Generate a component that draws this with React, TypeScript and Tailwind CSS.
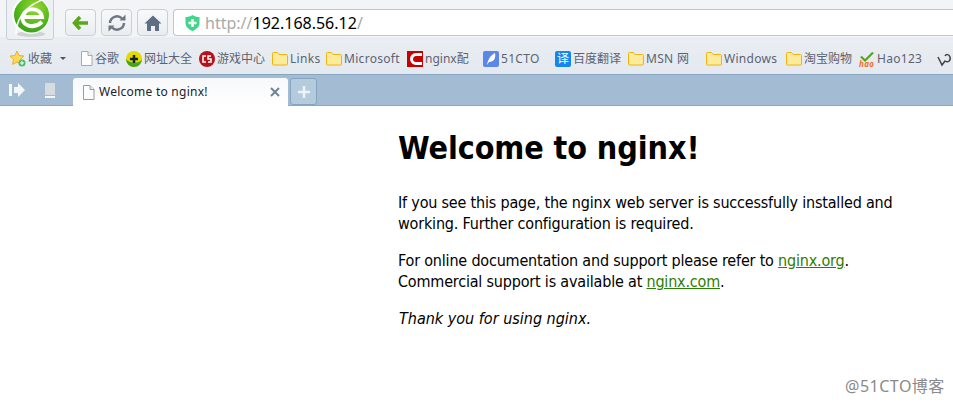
import React from "react";

function Folder() {
  return (
    <svg width="16" height="14" viewBox="0 0 16 14" className="shrink-0">
      <path d="M.5 1.500a1 1 0 0 1 1-1h4l1.500 2h7.500a1 1 0 0 1 1 1v8.500a1 1 0 0 1-1 1h-13a1 1 0 0 1-1-1z" fill="#fdeb9c" stroke="#f2b20f" />
    </svg>
  );
}

function Doc({ color = "#a9a9a9" }: { color?: string }) {
  return (
    <svg width="13" height="15" viewBox="0 0 13 15" className="shrink-0">
      <path d="M1.500.5h6.500l4 4v10h-10.500z" fill="#fdfdfd" stroke={color} />
      <path d="M8 .5v4h4" fill="#eee" stroke={color} />
    </svg>
  );
}

function Logo() {
  return (
    <svg width="40" height="38" viewBox="0 0 40 38" className="absolute left-[11px] top-0">
      <defs>
        <radialGradient id="lg" cx="0.6" cy="0.3" r="0.8">
          <stop offset="0" stopColor="#9bd832" />
          <stop offset="0.6" stopColor="#53b81c" />
          <stop offset="1" stopColor="#2f9a14" />
        </radialGradient>
      </defs>
      <ellipse cx="20" cy="34" rx="14" ry="3" fill="#cfd3d6" />
      <circle cx="20" cy="15" r="19" fill="#fff" />
      <circle cx="20.500" cy="15" r="17.500" fill="url(#lg)" />
      <path d="M37 -2C22 2 5 13 5 34" fill="none" stroke="#fff" strokeWidth="1.500" />
      <path d="M11 17h20c-1-9-16-11-19-1c-3 9 10 14 19 6" fill="none" stroke="#fff" strokeWidth="4" />
    </svg>
  );
}

function NavButton({ children }: { children: React.ReactNode }) {
  return (
    <div className="flex h-[27px] w-[31px] items-center justify-center rounded-[4px] border border-[#c6d0da] bg-gradient-to-b from-[#f8f9fa] to-[#e9edf1]">
      {children}
    </div>
  );
}

function Shield() {
  return (
    <svg width="15" height="16" viewBox="0 0 15 16" className="shrink-0">
      <path d="M7.500 0C5.500 1.500 3 2 .5 2v6c0 4 3.500 6.500 7 8c3.500-1.500 7-4 7-8V2C12 2 9.500 1.500 7.500 0z" fill="#3fd68c" />
      <path d="M7.500 4v8M3.500 8h8" stroke="#fff" strokeWidth="2.500" />
    </svg>
  );
}

function Bookmark({ className, icon, label }: { className: string; icon: React.ReactNode; label: string }) {
  return (
    <div className={`flex shrink-0 items-center gap-[2px] ${className}`}>
      {icon}
      <span className="whitespace-nowrap">{label}</span>
    </div>
  );
}

export default function App() {
  return (
    <div className="relative h-[404px] w-[953px] overflow-hidden bg-white font-['Noto_Sans','Noto_Sans_CJK_SC',sans-serif]">
      {/* toolbar */}
      <div className="relative flex h-[37px] items-start bg-[#f2f4f6] pl-[65px] pt-[9px]">
        <div className="absolute left-[6px] top-[-6px] h-[46px] w-[48px] rounded-[3px] border border-[#c6d0da] bg-[#eef1f4]" />
        <Logo />
        <div className="flex gap-[5px]">
          <NavButton>
            <svg width="18" height="16" viewBox="0 0 18 16">
              <path d="M8 2L2.500 8L8 14M3 8h13" fill="none" stroke="#5aa71c" strokeWidth="3.500" />
            </svg>
          </NavButton>
          <NavButton>
            <svg width="20" height="18" viewBox="0 0 20 18">
              <path d="M3 9a7 7 0 0 1 12-4.500M17 9a7 7 0 0 1-12 4.500" fill="none" stroke="#6e7882" strokeWidth="2.500" />
              <path d="M12.500 6.500h6v-6zM7.500 11.500h-6v6z" fill="#6e7882" />
            </svg>
          </NavButton>
          <NavButton>
            <svg width="18" height="16" viewBox="0 0 18 16">
              <path d="M9 .5L.5 8.500h2.500V16h4v-5h4v5h4V8.500h2.500z" fill="#5e6f85" />
            </svg>
          </NavButton>
        </div>
        <div className="ml-[5px] flex h-[27px] flex-1 items-center gap-[5px] rounded-l-[4px] border-y border-l border-[#b3c9de] bg-white pl-[11px] text-[16px] leading-none">
          <Shield />
          <span className="whitespace-nowrap">
            <span className="text-[#a9a9a9]">http://</span>
            <span className="text-black">192.168.56.12</span>
            <span className="text-[#a9a9a9]">/</span>
          </span>
        </div>
      </div>

      {/* bookmarks */}
      <div className="flex h-[37px] items-center bg-gradient-to-b from-[#eaeef2] to-[#e4e9f0] pl-[10px] pt-[6px] text-[12px] text-[#5c6373]">
        <div className="flex w-[70px] shrink-0 items-center gap-[2px]">
          <svg width="16" height="17" viewBox="0 0 16 17" className="shrink-0">
            <path d="M7 1l2 4.500 5 .5-3.500 3.500 1 5L7 12l-4.500 2.500 1-5L0 6l5-.5z" fill="#fdd85c" stroke="#e8b22c" />
            <circle cx="12" cy="13" r="3.500" fill="#4cbb6c" />
            <path d="M12 11v4M10 13h4" stroke="#fff" />
          </svg>
          <span>收藏</span>
          <span className="ml-[6px] h-0 w-0 border-x-[3px] border-t-[3px] border-x-transparent border-t-[#555]" />
        </div>
        <Bookmark className="w-[46px]" icon={<Doc />} label="谷歌" />
        <Bookmark
          className="w-[73px]"
          icon={
            <svg width="16" height="16" viewBox="0 0 16 16" className="shrink-0">
              <circle cx="8" cy="8" r="8" fill="#e3d900" />
              <path d="M0 8a8 8 0 0 0 16 0c-2 5-12 5-16 0z" fill="#43a51d" />
              <path d="M8 4v8M4 8h8" stroke="#123" strokeWidth="2.500" />
            </svg>
          }
          label="网址大全"
        />
        <Bookmark
          className="w-[73px]"
          icon={
            <svg width="16" height="16" viewBox="0 0 16 16" className="shrink-0">
              <circle cx="8" cy="8" r="8" fill="#b5121b" />
              <path d="M7 5H4v6h3M12 5H9v3h3v3H9" fill="none" stroke="#fff" strokeWidth="1.500" />
            </svg>
          }
          label="游戏中心"
        />
        <Bookmark className="w-[54px] tracking-[0.3px]" icon={<Folder />} label="Links" />
        <Bookmark className="w-[81px] tracking-[0.3px]" icon={<Folder />} label="Microsoft" />
        <Bookmark
          className="w-[76px]"
          icon={
            <svg width="16" height="16" viewBox="0 0 16 16" className="shrink-0">
              <rect width="16" height="16" fill="#c70000" />
              <path d="M15 3.500H9a4.500 4.500 0 0 0 0 9h6" fill="none" stroke="#fff" strokeWidth="3" />
            </svg>
          }
          label="nginx配"
        />
        <Bookmark
          className="w-[72px] tracking-[0.3px]"
          icon={
            <svg width="16" height="16" viewBox="0 0 16 16" className="shrink-0">
              <rect width="16" height="16" rx="2" fill="#5b87e8" />
              <path d="M4 14C5 8 8 4 12 2c1 5-1 9-6 9z" fill="#fff" />
            </svg>
          }
          label="51CTO"
        />
        <Bookmark
          className="w-[73px]"
          icon={
            <span className="flex h-[16px] w-[16px] shrink-0 items-center justify-center rounded-[2px] bg-[#1487ee] text-[12px] leading-none text-white">
              译
            </span>
          }
          label="百度翻译"
        />
        <Bookmark className="w-[78px] tracking-[0.3px]" icon={<Folder />} label="MSN 网" />
        <Bookmark className="w-[80px] tracking-[0.3px]" icon={<Folder />} label="Windows" />
        <Bookmark className="w-[73px]" icon={<Folder />} label="淘宝购物" />
        <Bookmark
          className="w-[78px] tracking-[0.3px]"
          icon={
            <svg width="16" height="16" viewBox="0 0 16 16" className="shrink-0">
              <path d="M3 5l3 3 7-7 2 1-9 9-5-5z" fill="#55a31a" />
              <text x="0" y="15.500" fontSize="8" fontStyle="italic" fontWeight="700" fill="#f0701d">hao</text>
            </svg>
          }
          label="Hao123"
        />
        <svg width="16" height="16" viewBox="0 0 16 16" className="shrink-0">
          <path d="M1 6l4 8 3-4c3 2 6 0 5-4c-1-3-4-3-5-1" fill="none" stroke="#444" strokeWidth="1.500" />
        </svg>
      </div>

      {/* tab bar */}
      <div className="flex h-[32px] items-end border-y border-t-[#86a6c2] border-b-[#8aa8c4] bg-[#a3bcd3]">
        <div className="flex h-[30px] w-[73px] shrink-0 items-center gap-[20px] self-start pl-[9px]">
          <svg width="16" height="14" viewBox="0 0 16 14">
            <path d="M0 1h3v12H0zM5 4h4V0l7 7-7 7v-4H5z" fill="#f4f7fa" />
          </svg>
          <svg width="10" height="15" viewBox="0 0 10 15">
            <rect x="0" y="0" width="10" height="12" fill="#d7dade" />
            <rect x="0" y="13" width="10" height="2" fill="#f4f7fa" />
          </svg>
        </div>
        <div className="-mb-px flex h-[28px] w-[215px] shrink-0 items-center rounded-t-[3px] bg-gradient-to-b from-[#f6f8fa] to-white pl-[9px] pr-[8px] text-[12px] text-[#222]">
          <Doc color="#9a9a9a" />
          <span className="ml-[4px] flex-1 whitespace-nowrap tracking-[0.25px]">Welcome to nginx!</span>
          <svg width="10" height="10" viewBox="0 0 10 10">
            <path d="M1 1l8 8M9 1l-8 8" stroke="#6f8296" strokeWidth="2" />
          </svg>
        </div>
        <div className="ml-[2px] flex h-[27px] w-[27px] shrink-0 items-center justify-center rounded-[3px] border border-[#84a4c1] bg-[#b4cadd]">
          <svg width="12" height="12" viewBox="0 0 12 12">
            <path d="M6 0v12M0 6h12" stroke="#eef3f8" strokeWidth="2.500" />
          </svg>
        </div>
      </div>

      {/* page */}
      <div className="pl-[398px] pt-[22px] font-['DejaVu_Sans',sans-serif] font-stretch-condensed text-[16px] leading-[21px] text-black">
        <h1 className="text-[32px] leading-[40px] font-bold tracking-[-0.1px]">Welcome to nginx!</h1>
        <p className="mt-[24px] tracking-[-0.19px]">
          If you see this page, the nginx web server is successfully installed and
          <br />
          working. Further configuration is required.
        </p>
        <p className="mt-[16px] tracking-[-0.19px]">
          For online documentation and support please refer to{" "}
          <a href="#" className="text-[#2e7d00] underline">nginx.org</a>.
          <br />
          Commercial support is available at{" "}
          <a href="#" className="text-[#2e7d00] underline">nginx.com</a>.
        </p>
        <p className="mt-[16px] pl-px italic">Thank you for using nginx.</p>
      </div>

      <div className="absolute left-[845px] top-[376px] text-[16px] leading-[20px] tracking-[0.5px] text-[#8a8a8a]">@51CTO博客</div>
    </div>
  );
}
